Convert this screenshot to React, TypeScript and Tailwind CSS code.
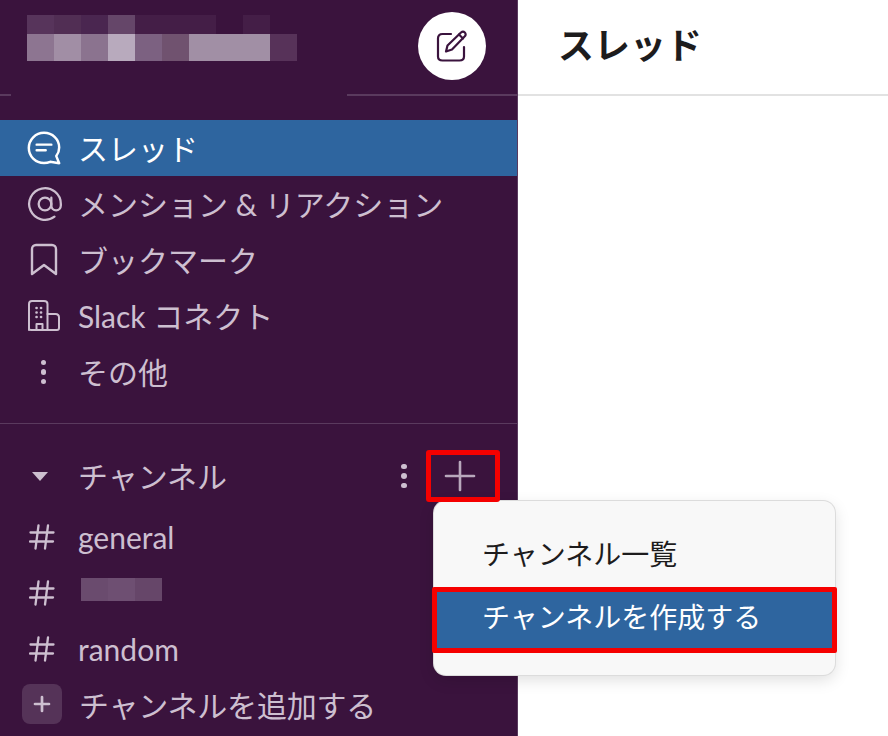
import { AtSign, Plus } from 'lucide-react'
import type { ReactNode } from 'react'

const topRow = ['#57345b', '#512e54', '#4a2650', '#654669', '#441e47', '#441e47', '#441e47', '#3a133d', '#441e47']
const bottomRow = ['#8d7591', '#a18ea5', '#8b738f', '#b8aabd', '#7c6181', '#70526f', '#a18fa5', '#a18fa5', '#a18fa5', '#573259']

function ThreadIcon() {
  return (
    <svg viewBox="0 0 32 32" className="h-9 w-9" fill="none" stroke="currentColor" strokeWidth="2.2" strokeLinecap="round" strokeLinejoin="round">
      <path d="M16 2.500c7.600 0 13.500 5.700 13.500 13 0 3-1 5.600-2.600 7.700l2.600 6.300-8-1.200c-1.800.7-3.600 1-5.500 1-7.600 0-13.500-6-13.500-13.300S8.400 2.500 16 2.500z" />
      <path d="M9.500 13h13M9.500 18h8" />
    </svg>
  )
}

function BookmarkIcon() {
  return (
    <svg viewBox="0 0 34 34" className="h-[34px] w-[34px]" fill="none" stroke="currentColor" strokeWidth="2.4" strokeLinecap="round" strokeLinejoin="round">
      <path d="M5 31V6c0-2.200 1.800-4 4-4h16c2.200 0 4 1.800 4 4v25l-12-9z" />
    </svg>
  )
}

function BuildingIcon() {
  return (
    <svg viewBox="0 0 34 34" className="h-[34px] w-[34px]" fill="none" stroke="currentColor" strokeWidth="2" strokeLinecap="round" strokeLinejoin="round">
      <path d="M2 31V5c0-2 1.300-3 3-3h12c2 0 3.500 1.300 3.500 3v26" />
      <path d="M20.500 15h8c2 0 3.500 1.500 3.500 3.500V29c0 1.300-.8 2-2 2H4c-1.300 0-2-.7-2-2" />
      <path d="M9.500 31v-6h6v6" />
      <path d="M9.500 9h.1M14 9h.1M9.500 13.500h.1M14 13.500h.1M9.500 18h.1M14 18h.1" strokeWidth="2.600" />
    </svg>
  )
}

function Dots({ className }: { className: string }) {
  return (
    <div className={`flex flex-col items-center gap-[4px] ${className}`}>
      <span className="h-[5.500px] w-[5.500px] rounded-full bg-current" />
      <span className="h-[5.500px] w-[5.500px] rounded-full bg-current" />
      <span className="h-[5.500px] w-[5.500px] rounded-full bg-current" />
    </div>
  )
}

function HashIcon() {
  return (
    <svg viewBox="0 0 26 26" className="h-[26px] w-[26px] -translate-x-[2px]" fill="none" stroke="currentColor" strokeWidth="2.300" strokeLinecap="round">
      <path d="M9.500 1.500 6.500 24.500M19 1.500 16 24.500M1.500 8.500h23M1 17.500h23" />
    </svg>
  )
}

function NavRow({ icon, label, active }: { icon: ReactNode; label: string; active?: boolean }) {
  return (
    <div className={`flex h-14 items-center ${active ? 'bg-[#2e659f] text-white' : 'text-[#cdbfd0]'}`}>
      <div className="flex w-[88px] shrink-0 justify-center pr-[1px]">{icon}</div>
      <span className="-ml-[10px] whitespace-nowrap text-[30px]">{label}</span>
    </div>
  )
}

export default function App() {
  return (
    <div
      className="relative flex h-[736px] w-[888px] overflow-hidden bg-white"
      style={{ fontFamily: 'Lato, "Noto Sans CJK JP", sans-serif' }}
    >
      <aside className="w-[518px] shrink-0 border-r border-[#5a3a5e] bg-[#3a133d]">
        <header className="relative flex h-[96px] justify-between pl-[27px] pr-[31px]">
          <div className="pt-[15px]">
            <div className="flex h-[19px]">
              {topRow.map((c, i) => (
                <span key={i} className="w-[27px]" style={{ background: c }} />
              ))}
            </div>
            <div className="flex h-[27px]">
              {bottomRow.map((c, i) => (
                <span key={i} className="w-[27px]" style={{ background: c }} />
              ))}
            </div>
          </div>
          <div className="mt-[12px] flex h-[68px] w-[68px] items-center justify-center rounded-full bg-white text-[#3a133d]">
            <svg viewBox="0 0 32 32" className="h-[32px] w-[32px]" fill="none" stroke="currentColor" strokeWidth="2.200" strokeLinecap="round" strokeLinejoin="round">
              <path d="M15 4H6.500C3.500 4 2 5.500 2 8.500v18C2 29 3.500 30.500 6.500 30.500h17c3 0 4.500-1.500 4.500-4V17" />
              <path d="M10 21.500l1.500-6L25 2.500c1.200-1 2.800-1 3.800 0s1.200 2.600 0 3.800L16 19.500z" />
              <path d="M23 4.500l4 4" />
            </svg>
          </div>
          <div className="absolute bottom-0 left-0 h-[2px] w-[11px] bg-[#5a3a5e]" />
          <div className="absolute bottom-0 left-[347px] right-0 h-[2px] bg-[#5a3a5e]" />
        </header>

        <nav className="mt-6 border-b border-[#5a3a5e] pb-[23px]">
          <NavRow active icon={<ThreadIcon />} label="スレッド" />
          <NavRow icon={<AtSign className="h-[38px] w-[38px] shrink-0 translate-x-[1px]" strokeWidth={1.450} />} label="メンション & リアクション" />
          <NavRow icon={<BookmarkIcon />} label="ブックマーク" />
          <NavRow icon={<BuildingIcon />} label="Slack コネクト" />
          <NavRow icon={<Dots className="" />} label="その他" />
        </nav>

        <div className="mt-[24px] flex h-14 items-center text-[#cdbfd0]">
          <div className="flex w-[78px] shrink-0 justify-center pl-[2px]">
            <span className="h-0 w-0 border-x-[8px] border-t-[9px] border-x-transparent border-t-current" />
          </div>
          <span className="whitespace-nowrap text-[30px]">チャンネル</span>
          <Dots className="ml-[174px]" />
          <div className="ml-[32px] flex h-[43px] w-[43px] items-center justify-center text-[#b8a8bc]">
            <Plus className="h-12 w-12 shrink-0" strokeWidth={1.300} />
          </div>
        </div>

        <div className="mt-[5px]">
          <NavRow icon={<HashIcon />} label="general" />
          <div className="flex h-14 items-center text-[#cdbfd0]">
            <div className="flex w-[81px] shrink-0 justify-center pl-[7px]"><HashIcon /></div>
            <div className="-mt-[8px] flex h-[23px] w-[81px]">
              <span className="w-[27px] bg-[#6a4b6e]" />
              <span className="w-[27px] bg-[#6e4f72]" />
              <span className="w-[27px] bg-[#664669]" />
            </div>
          </div>
          <NavRow icon={<HashIcon />} label="random" />
          <div className="flex h-14 items-center text-[#cdbfd0]">
            <div className="-mt-[2px] ml-[22px] flex h-10 w-10 items-center justify-center rounded-lg bg-[#553358]">
              <Plus className="h-6 w-6" strokeWidth={2.700} />
            </div>
            <span className="ml-[17px] whitespace-nowrap text-[30px] tracking-[-0.2px]">チャンネルを追加する</span>
          </div>
        </div>
      </aside>

      <main className="flex-1">
        <div className="flex h-[96px] items-center border-b-2 border-[#e2e2e2] pl-[40px] pb-[4px]">
          <h1 className="text-[36px] font-bold text-[#1d1c1d]">スレッド</h1>
        </div>
      </main>

      {/* dropdown */}
      <div className="absolute left-[434px] top-[501px] w-[401px] rounded-xl bg-[#f8f8f8] pt-6 pb-[22px] shadow-[0_0_0_1px_#dcdcdc,0_5px_16px_rgba(0,0,0,0.13)]">
        <div className="flex h-[62px] items-center pb-[5px] pl-[48px] text-[28px] text-[#1d1c1d]">チャンネル一覧</div>
        <div className="-mx-[2px] flex h-[66px] items-center rounded-[2px] border-[5px] border-[#f50000] bg-[#2e659f] pb-[6px] pl-[45px] text-[28px] text-white">チャンネルを作成する</div>
      </div>

      {/* red highlight around the plus */}
      <div className="absolute left-[426px] top-[450px] h-[52px] w-[74px] rounded-[3px] border-[5px] border-[#f50000]" />
    </div>
  )
}
